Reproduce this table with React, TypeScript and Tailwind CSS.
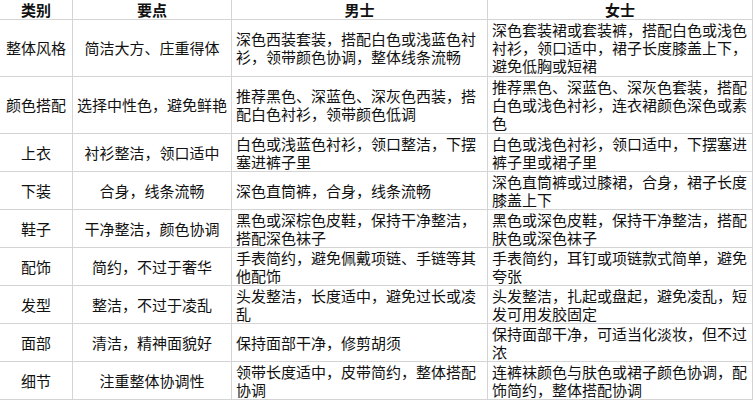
import { Fragment } from 'react'

const rows = [
  ['整体风格', '简洁大方、庄重得体', '深色西装套装，搭配白色或浅蓝色衬衫，领带颜色协调，整体线条流畅', '深色套装裙或套装裤，搭配白色或浅色衬衫，领口适中，裙子长度膝盖上下，避免低胸或短裙'],
  ['颜色搭配', '选择中性色，避免鲜艳', '推荐黑色、深蓝色、深灰色西装，搭配白色衬衫，领带颜色低调', '推荐黑色、深蓝色、深灰色套装，搭配白色或浅色衬衫，连衣裙颜色深色或素色'],
  ['上衣', '衬衫整洁，领口适中', '白色或浅蓝色衬衫，领口整洁，下摆塞进裤子里', '白色或浅色衬衫，领口适中，下摆塞进裤子里或裙子里'],
  ['下装', '合身，线条流畅', '深色直筒裤，合身，线条流畅', '深色直筒裤或过膝裙，合身，裙子长度膝盖上下'],
  ['鞋子', '干净整洁，颜色协调', '黑色或深棕色皮鞋，保持干净整洁，搭配深色袜子', '黑色或深色皮鞋，保持干净整洁，搭配肤色或深色袜子'],
  ['配饰', '简约，不过于奢华', '手表简约，避免佩戴项链、手链等其他配饰', '手表简约，耳钉或项链款式简单，避免夸张'],
  ['发型', '整洁，不过于凌乱', '头发整洁，长度适中，避免过长或凌乱', '头发整洁，扎起或盘起，避免凌乱，短发可用发胶固定'],
  ['面部', '清洁，精神面貌好', '保持面部干净，修剪胡须', '保持面部干净，可适当化淡妆，但不过浓'],
  ['细节', '注重整体协调性', '领带长度适中，皮带简约，整体搭配协调', '连裤袜颜色与肤色或裙子颜色协调，配饰简约，整体搭配协调'],
]

const cell = 'flex items-center border-r border-b border-[#d4d4d4]'

export default function App() {
  return (
    <div
      className="w-[755px] h-[400px] bg-white text-[15px] leading-[18px] text-[#111] overflow-hidden"
      style={{ fontFamily: '"Noto Sans CJK SC", "Noto Sans", sans-serif' }}
    >
      <div className="grid grid-cols-[73px_159px_256px_265px] grid-rows-[20px_57px_57px_repeat(7,38px)]">
        {/* header */}
        <div className={`${cell} justify-center font-bold`}>类别</div>
        <div className={`${cell} justify-center font-bold`}>要点</div>
        <div className={`${cell} justify-center font-bold`}>男士</div>
        <div className={`${cell} justify-center font-bold`}>女士</div>

        {rows.map((r) => (
          <Fragment key={r[0]}>
            <div className={`${cell} justify-center text-center`}>{r[0]}</div>
            <div className={`${cell} justify-center text-center`}>{r[1]}</div>
            <div className={`${cell} px-1`}>
              <span>{r[2]}</span>
            </div>
            <div className={`${cell} px-1`}>
              <span>{r[3]}</span>
            </div>
          </Fragment>
        ))}
      </div>
    </div>
  )
}
